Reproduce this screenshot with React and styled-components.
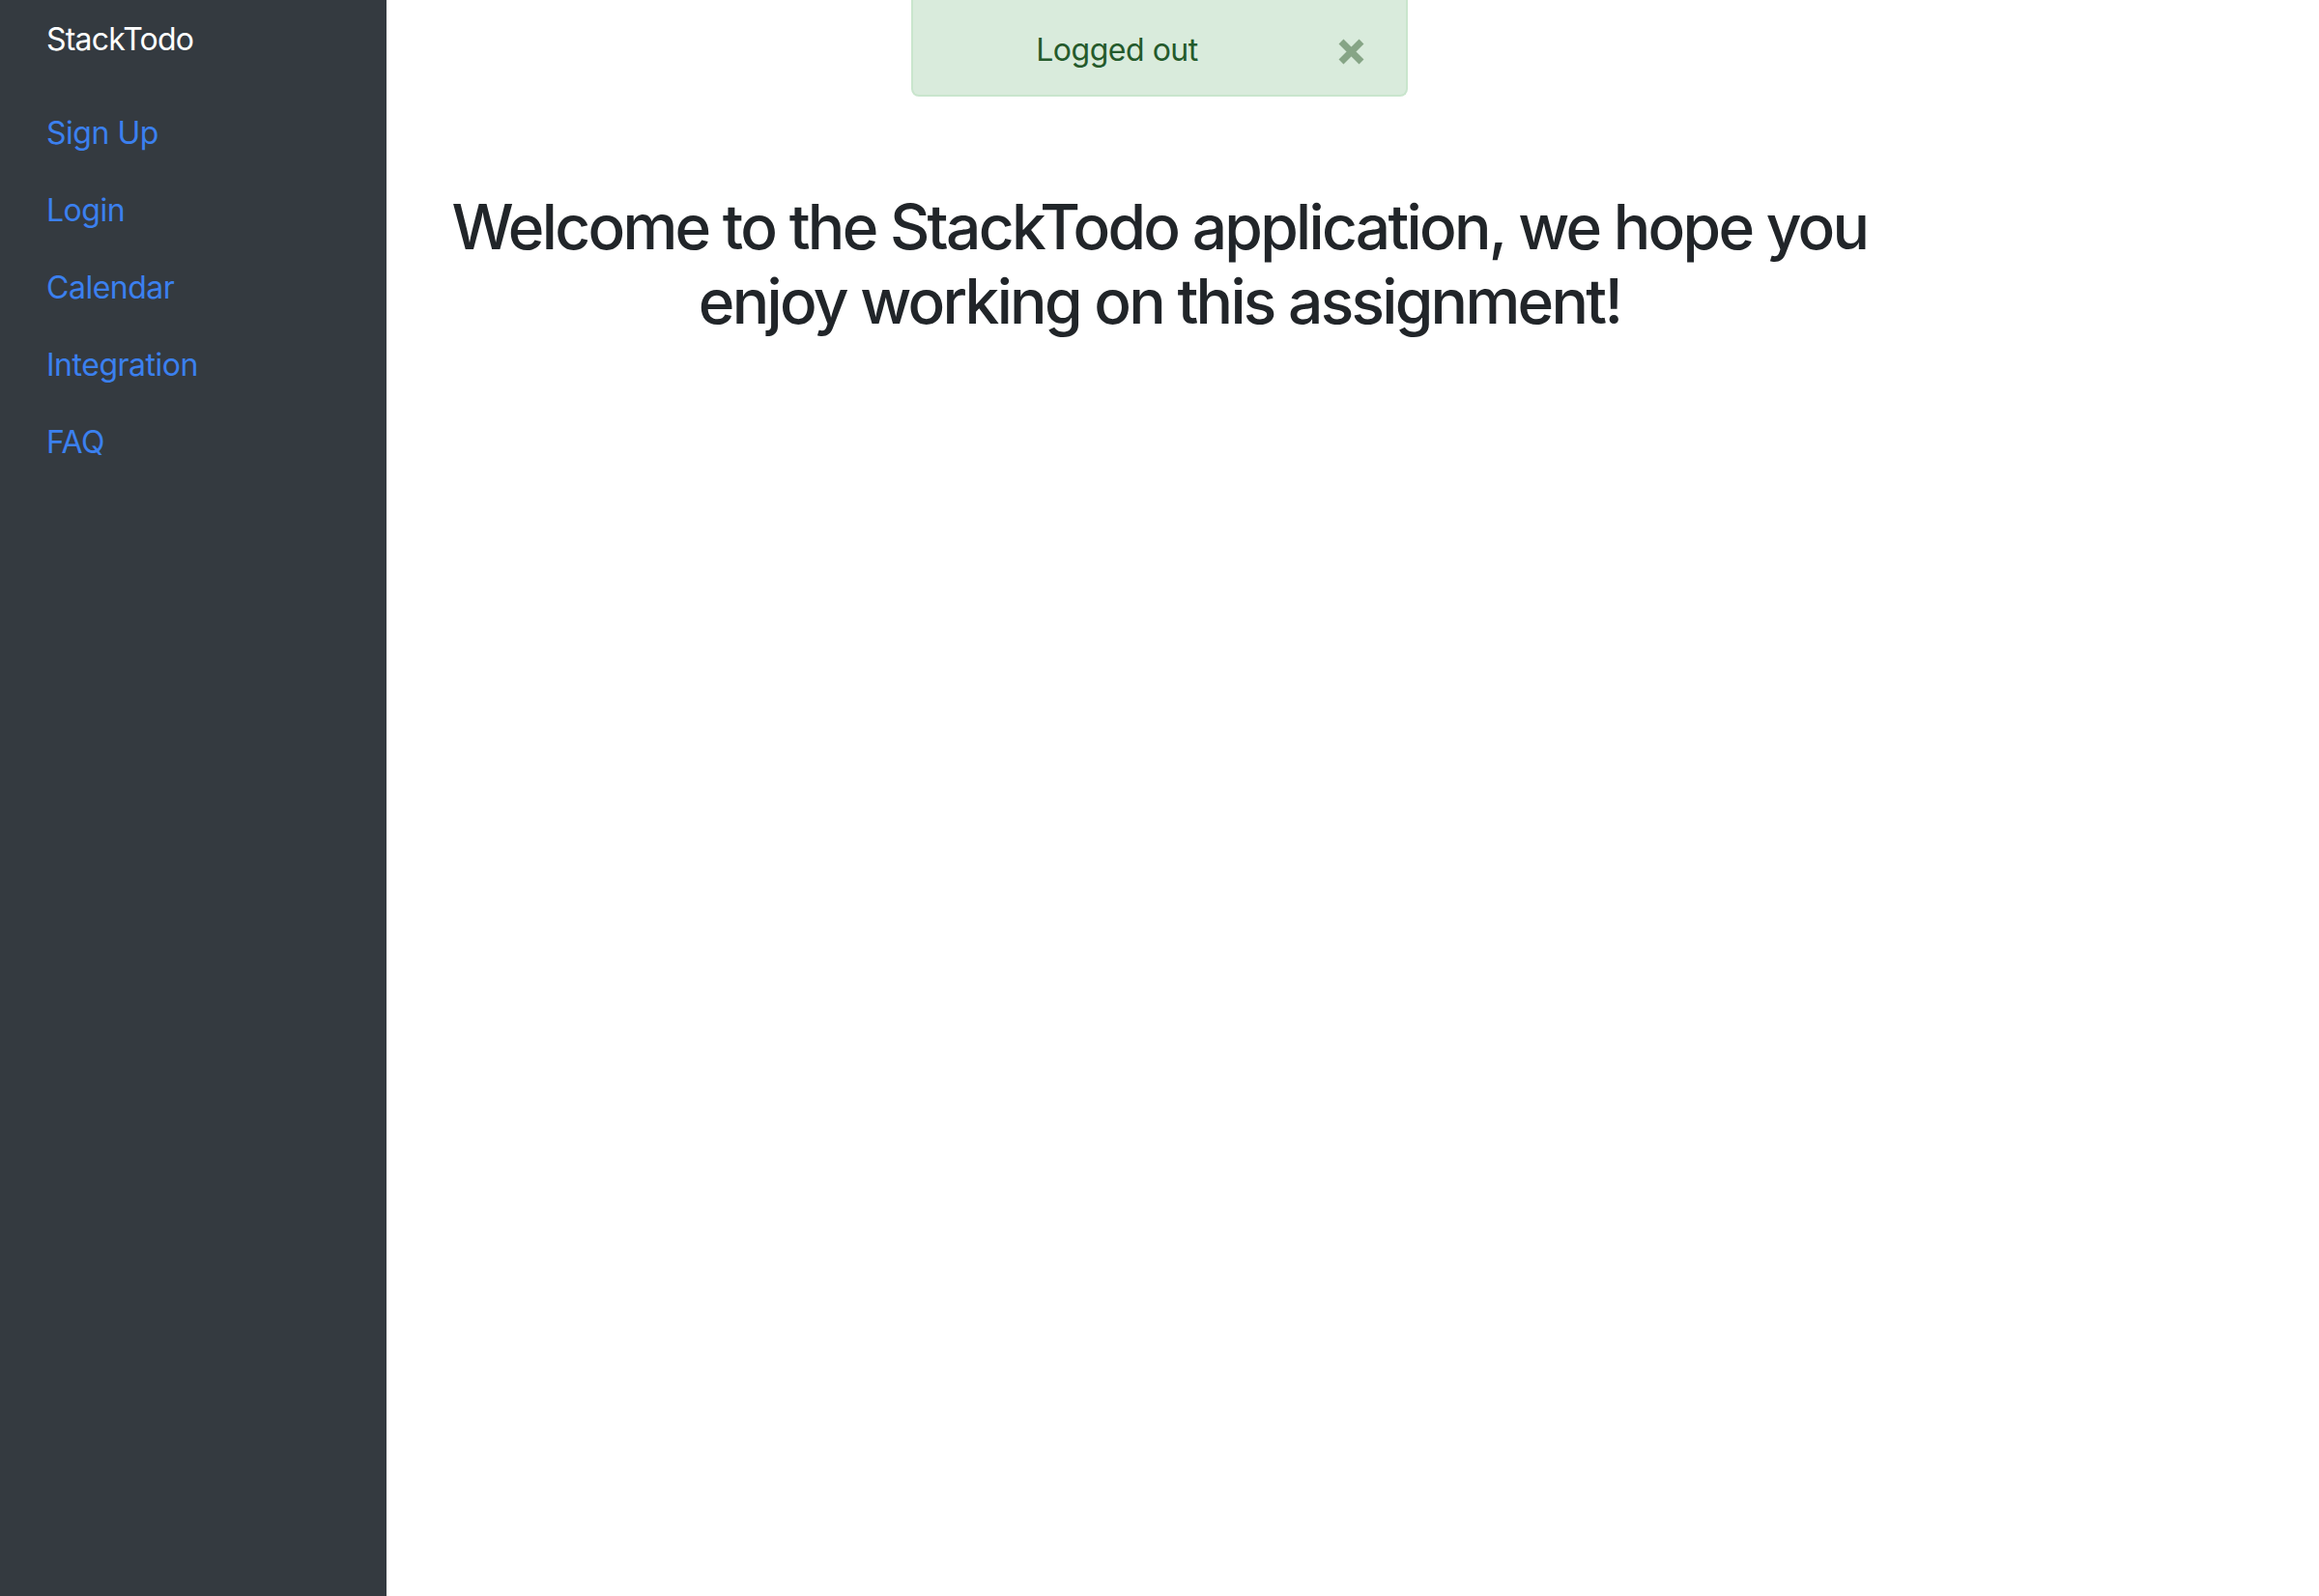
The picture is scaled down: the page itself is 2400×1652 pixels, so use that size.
import React, { useState } from "react";
import styled, { createGlobalStyle } from "styled-components";

const GlobalStyle = createGlobalStyle`
  html, body {
    margin: 0;
    padding: 0;
    background: #fff;
  }
  body {
    font-family: Inter, "Noto Sans", "Liberation Sans", sans-serif;
    color: #212529;
  }
  * {
    box-sizing: border-box;
  }
`;

const links = ["Sign Up", "Login", "Calendar", "Integration", "FAQ"];

const App = () => {
  const [showAlert, setShowAlert] = useState(true);

  return (
    <>
      <GlobalStyle />
      <Layout>
        <Sidebar>
          <Brand href="#">StackTodo</Brand>
          <Nav>
            {links.map((label) => (
              <NavLink key={label} href="#">
                {label}
              </NavLink>
            ))}
          </Nav>
        </Sidebar>
        <Main>
          <Container>
            {showAlert && (
              <Alert role="alert">
                <span>Logged out</span>
                <CloseButton
                  type="button"
                  aria-label="Close"
                  onClick={() => setShowAlert(false)}
                >
                  <svg width="27" height="27" viewBox="0 0 27 27">
                    <path
                      d="M3 3 L24 24 M24 3 L3 24"
                      stroke="currentColor"
                      strokeWidth="7"
                      strokeLinecap="butt"
                    />
                  </svg>
                </CloseButton>
              </Alert>
            )}
            <Title>
              Welcome to the StackTodo application, we hope you enjoy working
              on this assignment!
            </Title>
          </Container>
        </Main>
      </Layout>
    </>
  );
};

export default App;

const Layout = styled.div`
  display: flex;
  min-height: 100vh;
`;

const Sidebar = styled.aside`
  flex: 0 0 400px;
  width: 400px;
  min-height: 100vh;
  background: #343a40;
  padding: 17px 0 0 0;
  display: flex;
  flex-direction: column;
`;

const Brand = styled.a`
  display: block;
  padding: 0 48px;
  font-size: 32px;
  line-height: 48px;
  letter-spacing: -0.025em;
  color: #fff;
  text-decoration: none;
  font-weight: 400;
`;

const Nav = styled.nav`
  display: flex;
  flex-direction: column;
  margin-top: 33px;
`;

const NavLink = styled.a`
  display: block;
  padding: 16px 48px;
  font-size: 32px;
  line-height: 48px;
  letter-spacing: -0.015em;
  color: #3b80ef;
  text-decoration: none;
`;

const Main = styled.main`
  flex: 1;
`;

const Container = styled.div`
  width: 1600px;
  display: flex;
  flex-direction: column;
  align-items: center;
`;

const Alert = styled.div`
  position: relative;
  width: 514px;
  height: 100px;
  padding: 28px 128px 24px 40px;
  background: #d9ebdc;
  border: 2px solid #c9e5cd;
  border-top: none;
  border-radius: 0 0 8px 8px;
  color: #245a2b;
  font-size: 32px;
  line-height: 48px;
  letter-spacing: -0.015em;
  text-align: center;
`;

const CloseButton = styled.button`
  position: absolute;
  top: 0;
  right: 0;
  height: 100%;
  padding: 0 43px 0 40px;
  border: 0;
  background: transparent;
  color: #86a586;
  display: flex;
  align-items: center;
  cursor: pointer;
  svg {
    display: block;
    margin-top: 8px;
  }
`;

const Title = styled.h1`
  margin: 97px 0 0;
  width: 1540px;
  font-size: 64px;
  font-weight: 500;
  line-height: 1.2;
  letter-spacing: -0.042em;
  text-align: center;
  color: #212529;
`;
